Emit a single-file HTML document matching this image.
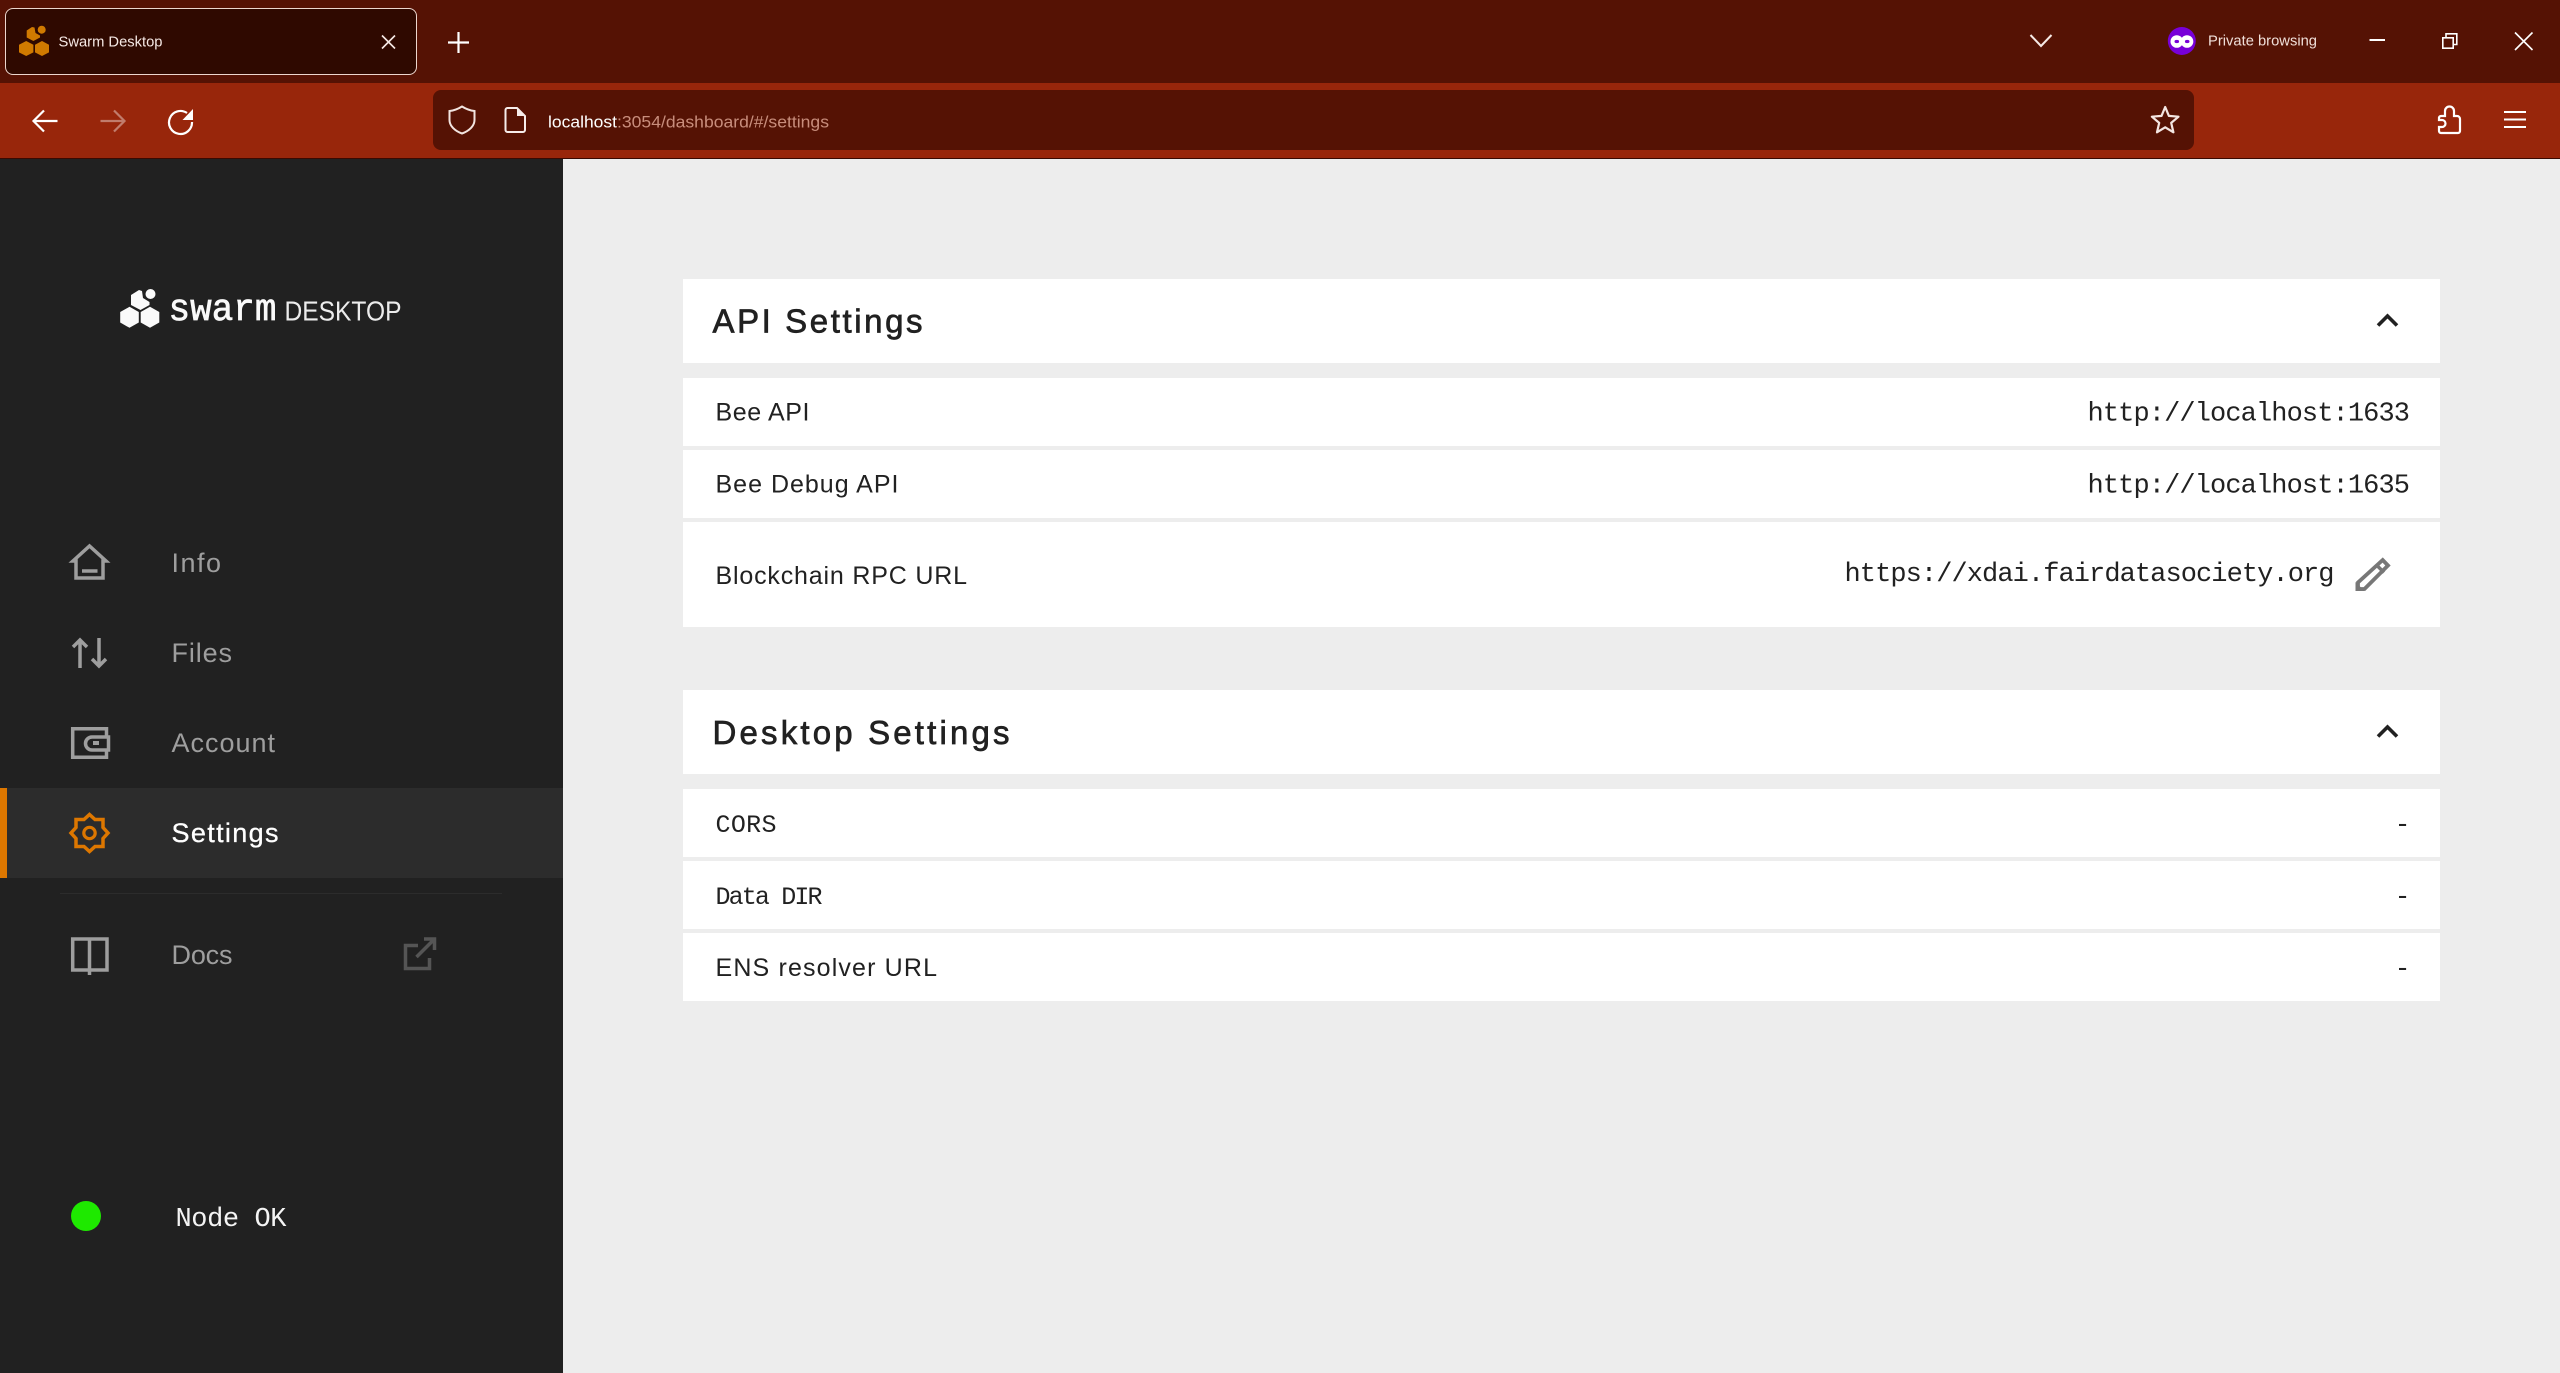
<!DOCTYPE html>
<html lang="en">
<head>
<meta charset="utf-8">
<title>Swarm Desktop</title>
<style>
html,body{margin:0;padding:0;width:2560px;height:1373px;overflow:hidden;background:#ededed;}
.b{position:absolute;}
svg{position:absolute;left:0;top:0;}
text{white-space:pre;}
.s{font-family:"Liberation Sans",sans-serif;}
.m{font-family:"Liberation Mono",monospace;}
</style>
</head>
<body>
<div class="b" style="left:0;top:0;width:2560px;height:83px;background:#551204"></div>
<div class="b" style="left:0;top:83px;width:2560px;height:75px;background:#98260b"></div>
<div class="b" style="left:0;top:158px;width:2560px;height:1px;background:#3a0a02"></div>
<div class="b" style="left:5px;top:8px;width:410px;height:65px;background:#2f0900;border:1.5px solid #ecd6ce;border-radius:8px"></div>
<div class="b" style="left:433px;top:90px;width:1761px;height:60px;background:#551204;border-radius:8px"></div>
<div class="b" style="left:0;top:159px;width:563px;height:1214px;background:#212121"></div>
<div class="b" style="left:0;top:788px;width:563px;height:90px;background:#2c2c2c"></div>
<div class="b" style="left:0;top:788px;width:7px;height:90px;background:#dd7700"></div>
<div class="b" style="left:60px;top:893px;width:442px;height:1px;background:#2c2c2c"></div>

<div class="b" style="left:683px;top:279px;width:1757px;height:84px;background:#fff"></div>
<div class="b" style="left:683px;top:378px;width:1757px;height:68px;background:#fff"></div>
<div class="b" style="left:683px;top:450px;width:1757px;height:68px;background:#fff"></div>
<div class="b" style="left:683px;top:522px;width:1757px;height:105px;background:#fff"></div>
<div class="b" style="left:683px;top:690px;width:1757px;height:84px;background:#fff"></div>
<div class="b" style="left:683px;top:789px;width:1757px;height:68px;background:#fff"></div>
<div class="b" style="left:683px;top:861px;width:1757px;height:68px;background:#fff"></div>
<div class="b" style="left:683px;top:933px;width:1757px;height:68px;background:#fff"></div>

<svg width="2560" height="1373" viewBox="0 0 2560 1373" xmlns="http://www.w3.org/2000/svg">
  <!-- favicon -->
  <g fill="#d07a00">
    <polygon points="26.2,41 33.4,44.8 33.4,52.4 26.2,56 19,52.4 19,44.8"/>
    <polygon points="42,41 49,44.8 49,52.4 42,56 35,52.4 35,44.8"/>
    <polygon points="32,27 26.7,30.5 26.7,37.5 33.4,41 40,37.5 40,35.5 35.5,33 34.5,27.5"/>
    <circle cx="41.7" cy="29.7" r="4"/>
  </g>
  <text class="s" x="58.5" y="46.5" font-size="15" fill="#f6e9e5" textLength="104" lengthAdjust="spacingAndGlyphs">Swarm Desktop</text>
  <path d="M382,35.5 L395,48.5 M395,35.5 L382,48.5" stroke="#f6e9e5" stroke-width="1.6" fill="none"/>
  <path d="M458.5,32 V53 M448,42.5 H469" stroke="#fff" stroke-width="2.2" fill="none"/>

  <!-- top right -->
  <path d="M2030.5,35 L2041,46 L2051.5,35" stroke="#f6e9e5" stroke-width="2" fill="none"/>
  <circle cx="2181.8" cy="41" r="14" fill="#7800d8"/>
  <ellipse cx="2176.8" cy="41.5" rx="6.3" ry="6.3" fill="#fff"/>
  <ellipse cx="2187" cy="41.5" rx="6.3" ry="6.3" fill="#fff"/>
  <ellipse cx="2176.8" cy="41.5" rx="2.3" ry="1.6" fill="#7800d8"/>
  <ellipse cx="2187.2" cy="41.5" rx="2.3" ry="1.6" fill="#7800d8"/>
  <text class="s" x="2208" y="45.5" font-size="15" fill="#f0dfd9" textLength="109" lengthAdjust="spacingAndGlyphs">Private browsing</text>
  <rect x="2369.5" y="39" width="15.5" height="2" fill="#fff"/>
  <path d="M2442.8,37.8 H2453.2 V48.2 H2442.8 Z M2446,37.5 V33.8 H2456.8 V44.5 H2453.5" stroke="#fff" stroke-width="1.6" fill="none"/>
  <path d="M2515,32.5 L2532.5,50 M2532.5,32.5 L2515,50" stroke="#fff" stroke-width="1.6" fill="none"/>

  <!-- nav toolbar -->
  <path d="M33.5,121 H57.5 M44,110.5 L33.5,121 L44,131.5" stroke="#fff" stroke-width="2.2" fill="none"/>
  <path d="M100.5,121 H124.5 M114,110.5 L124.5,121 L114,131.5" stroke="#fff" stroke-opacity=".4" stroke-width="2.2" fill="none"/>
  <path d="M187,113 A11.5,11.5 0 1 0 192,122" stroke="#fff" stroke-width="2.2" fill="none"/>
  <polygon points="193,109 193,120 182.5,120" fill="#fff"/>
  <path d="M462,106.5 C458,109 454,110.5 449.5,111 V120 C449.5,126 455,131 462,133.5 C469,131 474.5,126 474.5,120 V111 C470,110.5 466,109 462,106.5 Z" stroke="#f2e4e0" stroke-width="2" fill="none"/>
  <path d="M505.5,110 a2,2 0 0 1 2,-2 H517 L525,116 V130 a2,2 0 0 1 -2,2 H507.5 a2,2 0 0 1 -2,-2 Z" stroke="#f6ecea" stroke-width="2" fill="none"/>
  <polygon points="517,108 525,116 517,116" fill="#f6ecea"/>
  <text class="s" x="548" y="127.5" font-size="16.5" fill="#fff" textLength="69" lengthAdjust="spacingAndGlyphs">localhost</text>
  <text class="s" x="617" y="127.5" font-size="16.5" fill="#c88d7c" textLength="212" lengthAdjust="spacingAndGlyphs">:3054/dashboard/#/settings</text>
  <g transform="translate(2165.2,121)"><polygon points="0,-14 3.7,-5.1 13.3,-4.3 6,1.9 8.2,11.3 0,6.3 -8.2,11.3 -6,1.9 -13.3,-4.3 -3.7,-5.1" stroke="#f4e6e2" stroke-width="2.2" stroke-linejoin="round" fill="none"/></g>
  <path d="M2441,116 H2445 V111 a4.5,4.5 0 0 1 9,0 V116 H2457 a3,3 0 0 1 3,3 V131 a2,2 0 0 1 -2,2 H2441 a2,2 0 0 1 -2,-2 V127 H2442 a3.5,3.5 0 0 0 0,-7 H2439 V118 a2,2 0 0 1 2,-2 Z" stroke="#fff" stroke-width="2.2" fill="none"/>
  <path d="M2504,112 H2526 M2504,119.5 H2526 M2504,127 H2526" stroke="#fff" stroke-width="2" fill="none"/>

  <!-- logo -->
  <g fill="#fafafa">
    <polygon points="129.5,306.8 138.8,312 138.8,322.5 129.5,327.8 120.2,322.5 120.2,312"/>
    <polygon points="150,306.8 159.3,312 159.3,322.5 150,327.8 140.7,322.5 140.7,312"/>
    <polygon points="139,290 131,295 131,305 140.5,310 149.5,305 149.5,302 143,298 142,291"/>
    <circle cx="150.5" cy="294" r="5"/>
  </g>
  <text class="m" x="168.5" y="320" font-size="38" fill="#fafafa" stroke="#fafafa" stroke-width=".7" textLength="108" lengthAdjust="spacingAndGlyphs">swarm</text>
  <text class="s" x="284.5" y="320.5" font-size="28" fill="#ececec" textLength="117" lengthAdjust="spacingAndGlyphs">DESKTOP</text>

  <!-- nav icons -->
  <g stroke="#9e9e9e" stroke-width="3.5" fill="none">
    <path d="M76,561 H73 L89.5,546 L106,561 H103 V578 H76 Z"/>
    <path d="M82,571 H97.5"/>
    <path d="M80,668 V640 M73,647 L80,640 L87,647"/>
    <path d="M99,638 V666 M92,659 L99,666 L106,659"/>
    <path d="M106.5,737 V728.7 H72.7 V757.2 H106.5 V751"/>
    <path d="M108.5,737 H92 a6.5,6.5 0 0 0 0,13 H108.5 Z"/>
    <path d="M72.7,939 H107 V970 H72.7 Z M89.5,939 V975"/>
  </g>
  <rect x="93" y="741" width="6" height="4" fill="#9e9e9e"/>
  <polygon transform="translate(89.5,833)" points="0,-18.5 5.5,-13.5 13.5,-13.5 13.5,-5.5 18.5,0 13.5,5.5 13.5,13.5 5.5,13.5 0,18.5 -5.5,13.5 -13.5,13.5 -13.5,5.5 -18.5,0 -13.5,-5.5 -13.5,-13.5 -5.5,-13.5" stroke="#dd7700" stroke-width="3.5" fill="none"/>
  <circle cx="89.5" cy="833" r="5.7" stroke="#dd7700" stroke-width="3.2" fill="none"/>
  <path d="M418,945.5 H405.5 V968.5 H429.5 V958 M416.5,957 L434,939.5 M424,939 H434.5 V950" stroke="#555" stroke-width="3.5" fill="none"/>

  <!-- nav text -->
  <text class="s" x="171.5" y="572" font-size="27" fill="#9e9e9e" textLength="49.5">Info</text>
  <text class="s" x="171.5" y="662" font-size="27" fill="#9e9e9e" textLength="60.5">Files</text>
  <text class="s" x="171.5" y="752" font-size="27" fill="#9e9e9e" textLength="103.5">Account</text>
  <text class="s" x="171.5" y="842" font-size="27" fill="#fff" stroke="#fff" stroke-width=".3" textLength="107">Settings</text>
  <text class="s" x="171.5" y="964" font-size="27" fill="#9e9e9e" textLength="61">Docs</text>

  <circle cx="86" cy="1216" r="15" fill="#1ee900"/>
  <text class="m" x="175.5" y="1226" font-size="27" fill="#f4f4f4" textLength="111">Node OK</text>

  <!-- panels text -->
  <g fill="#212121">
    <text class="s" x="712.5" y="332.5" font-size="33" stroke="#212121" stroke-width=".7" textLength="210">API Settings</text>
    <text class="s" x="715.5" y="420.7" font-size="25" textLength="94">Bee API</text>
    <text class="s" x="715.5" y="492.7" font-size="25" textLength="183">Bee Debug API</text>
    <text class="s" x="715.5" y="584" font-size="25" textLength="251.5">Blockchain RPC URL</text>
    <text class="m" x="2087.5" y="420.7" font-size="27" textLength="322.5">http://localhost:1633</text>
    <text class="m" x="2087.5" y="492.7" font-size="27" textLength="322.5">http://localhost:1635</text>
    <text class="m" x="1844.5" y="581" font-size="27" textLength="490">https://xdai.fairdatasociety.org</text>

    <text class="s" x="712.5" y="744" font-size="33" stroke="#212121" stroke-width=".7" textLength="297">Desktop Settings</text>
    <text class="m" x="715.5" y="832" font-size="25" textLength="61">CORS</text>
    <text class="m" x="715.5" y="904" font-size="25" textLength="107">Data DIR</text>
    <text class="s" x="715.5" y="976" font-size="25" textLength="221.5">ENS resolver URL</text>
    <text class="m" x="2402.5" y="832" font-size="26" text-anchor="middle">-</text>
    <text class="m" x="2402.5" y="904" font-size="26" text-anchor="middle">-</text>
    <text class="m" x="2402.5" y="976" font-size="26" text-anchor="middle">-</text>
  </g>
  <path d="M2378,325.5 L2387.5,316 L2397,325.5" stroke="#212121" stroke-width="3.6" fill="none"/>
  <path d="M2378,736.5 L2387.5,727 L2397,736.5" stroke="#212121" stroke-width="3.6" fill="none"/>

  <!-- pencil -->
  <path d="M2358,589 V582.5 L2382.7,560 L2388,565.5 L2364.5,589 Z" stroke="#777" stroke-width="3.8" stroke-linejoin="miter" fill="none"/>
  <path d="M2376,564.5 L2384,572.5" stroke="#777" stroke-width="3.4" fill="none"/>
  <polygon points="2355.5,591 2355.5,582 2364.5,591" fill="#777"/>
</svg>
</body>
</html>
